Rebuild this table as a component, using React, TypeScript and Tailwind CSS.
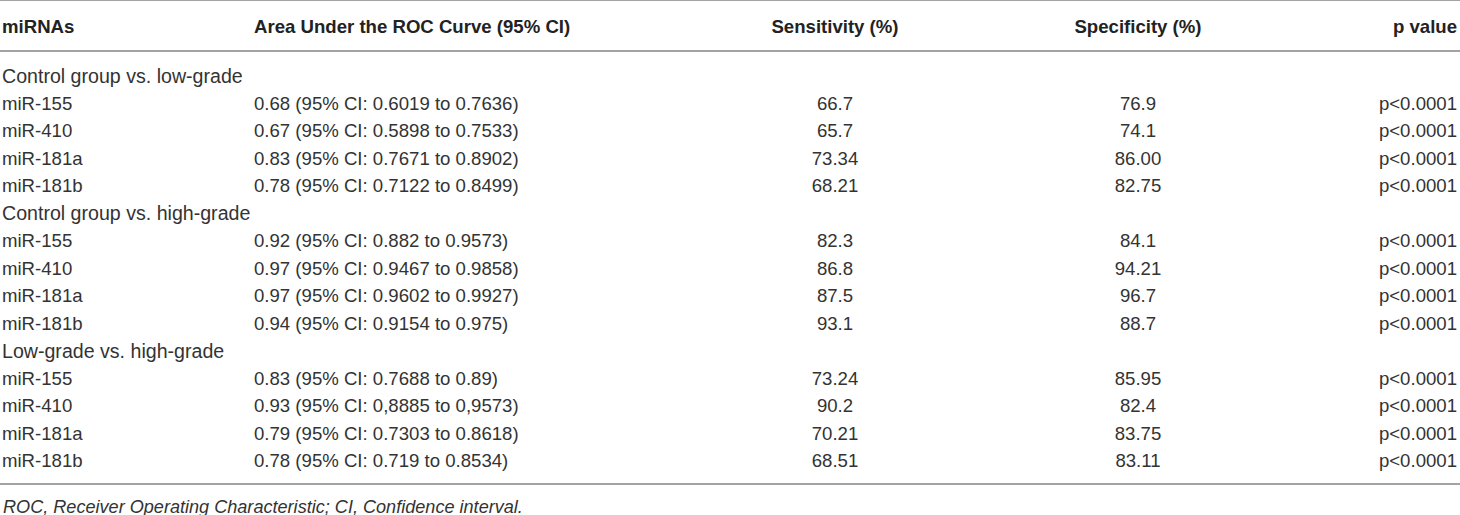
const HEADERS = ["miRNAs", "Area Under the ROC Curve (95% CI)", "Sensitivity (%)", "Specificity (%)", "p value"];

type Row = { mirna: string; auc: string; sens: string; spec: string; p: string };
type Group = { title: string; rows: Row[] };

const GROUPS: Group[] = [
  {
    title: "Control group vs. low-grade",
    rows: [
      { mirna: "miR-155", auc: "0.68 (95% CI: 0.6019 to 0.7636)", sens: "66.7", spec: "76.9", p: "p<0.0001" },
      { mirna: "miR-410", auc: "0.67 (95% CI: 0.5898 to 0.7533)", sens: "65.7", spec: "74.1", p: "p<0.0001" },
      { mirna: "miR-181a", auc: "0.83 (95% CI: 0.7671 to 0.8902)", sens: "73.34", spec: "86.00", p: "p<0.0001" },
      { mirna: "miR-181b", auc: "0.78 (95% CI: 0.7122 to 0.8499)", sens: "68.21", spec: "82.75", p: "p<0.0001" },
    ],
  },
  {
    title: "Control group vs. high-grade",
    rows: [
      { mirna: "miR-155", auc: "0.92 (95% CI: 0.882 to 0.9573)", sens: "82.3", spec: "84.1", p: "p<0.0001" },
      { mirna: "miR-410", auc: "0.97 (95% CI: 0.9467 to 0.9858)", sens: "86.8", spec: "94.21", p: "p<0.0001" },
      { mirna: "miR-181a", auc: "0.97 (95% CI: 0.9602 to 0.9927)", sens: "87.5", spec: "96.7", p: "p<0.0001" },
      { mirna: "miR-181b", auc: "0.94 (95% CI: 0.9154 to 0.975)", sens: "93.1", spec: "88.7", p: "p<0.0001" },
    ],
  },
  {
    title: "Low-grade vs. high-grade",
    rows: [
      { mirna: "miR-155", auc: "0.83 (95% CI: 0.7688 to 0.89)", sens: "73.24", spec: "85.95", p: "p<0.0001" },
      { mirna: "miR-410", auc: "0.93 (95% CI: 0,8885 to 0,9573)", sens: "90.2", spec: "82.4", p: "p<0.0001" },
      { mirna: "miR-181a", auc: "0.79 (95% CI: 0.7303 to 0.8618)", sens: "70.21", spec: "83.75", p: "p<0.0001" },
      { mirna: "miR-181b", auc: "0.78 (95% CI: 0.719 to 0.8534)", sens: "68.51", spec: "83.11", p: "p<0.0001" },
    ],
  },
];

// column template shared by header and body rows
const COLS = "grid grid-cols-[252px_426px_310px_296px_171px] pl-[2px] pr-[3px]";

export default function App() {
  return (
    <div className="w-[1460px] h-[515px] bg-white text-[#333] text-[18.6px] leading-none font-['Liberation_Sans',Arial,sans-serif]">
      {/* Header */}
      <div className={`${COLS} h-[52px] pt-[3px] items-center border-t border-b-2 border-[#a3a3a3] text-[#222] font-bold`}>
        <div>{HEADERS[0]}</div>
        <div>{HEADERS[1]}</div>
        <div className="text-center">{HEADERS[2]}</div>
        <div className="text-center">{HEADERS[3]}</div>
        <div className="text-right">{HEADERS[4]}</div>
      </div>

      {/* Body */}
      <div className="pt-[11px] pb-[7px] border-b-2 border-[#a3a3a3]">
        {GROUPS.map((g) => (
          <div key={g.title}>
            <div className={`${COLS} h-[27.5px] items-center`}>
              <div className="col-span-5 whitespace-nowrap text-[19.6px]">{g.title}</div>
            </div>
            {g.rows.map((r) => (
              <div key={g.title + r.mirna} className={`${COLS} h-[27.5px] items-center`}>
                <div>{r.mirna}</div>
                <div>{r.auc}</div>
                <div className="text-center">{r.sens}</div>
                <div className="text-center">{r.spec}</div>
                <div className="text-right">{r.p}</div>
              </div>
            ))}
          </div>
        ))}
      </div>

      {/* Footnote */}
      <div className="pl-[3px] pt-[13px] italic text-[18.1px]">
        ROC, Receiver Operating Characteristic; CI, Confidence interval.
      </div>
    </div>
  );
}
